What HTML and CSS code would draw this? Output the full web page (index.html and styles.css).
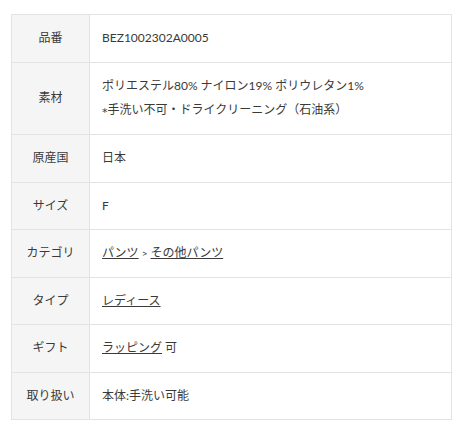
FILE: index.html
```html
<!DOCTYPE html>
<html lang="ja">
<head>
<meta charset="utf-8">
<link rel="stylesheet" href="styles.css">
</head>
<body>
<table class="spec">
  <tr><th>品番</th><td>BEZ1002302A0005</td></tr>
  <tr><th>素材</th><td>ポリエステル80% ナイロン19% ポリウレタン1%<br><span class="ast">*</span>手洗い不可・ドライクリーニング（石油系）</td></tr>
  <tr><th>原産国</th><td>日本</td></tr>
  <tr><th>サイズ</th><td>F</td></tr>
  <tr><th>カテゴリ</th><td><a href="#">パンツ</a> <span class="sep">&gt;</span> <a href="#">その他パンツ</a></td></tr>
  <tr><th>タイプ</th><td><a href="#">レディース</a></td></tr>
  <tr><th>ギフト</th><td><a href="#">ラッピング</a> 可</td></tr>
  <tr><th>取り扱い</th><td>本体:手洗い可能</td></tr>
</table>
</body>
</html>
```
FILE: styles.css
```css
html, body {
  margin: 0;
  background: #fff;
}
body {
  padding: 14px 4px 0 11px;
  font-family: Lato, "Noto Sans CJK JP", sans-serif;
  font-size: 12px;
  color: #3a3a3a;
}
.spec {
  width: 441px;
  border-collapse: collapse;
  border: 1px solid #e3e3e3;
}
.spec th,
.spec td {
  border: 1px solid #e3e3e3;
  padding: 11px 12px 11.5px;
  line-height: 24px;
  vertical-align: middle;
}
.spec th {
  width: 53px;
  background: #f5f5f5;
  font-weight: normal;
  text-align: center;
}
.spec td {
  text-align: left;
}
.spec a {
  color: #3a3a3a;
  text-decoration: underline;
}
.ast {
  font-family: "DejaVu Sans", sans-serif;
  font-size: 11px;
  position: relative;
  top: 2px;
}
.sep {
  font-size: 10px;
}
```
